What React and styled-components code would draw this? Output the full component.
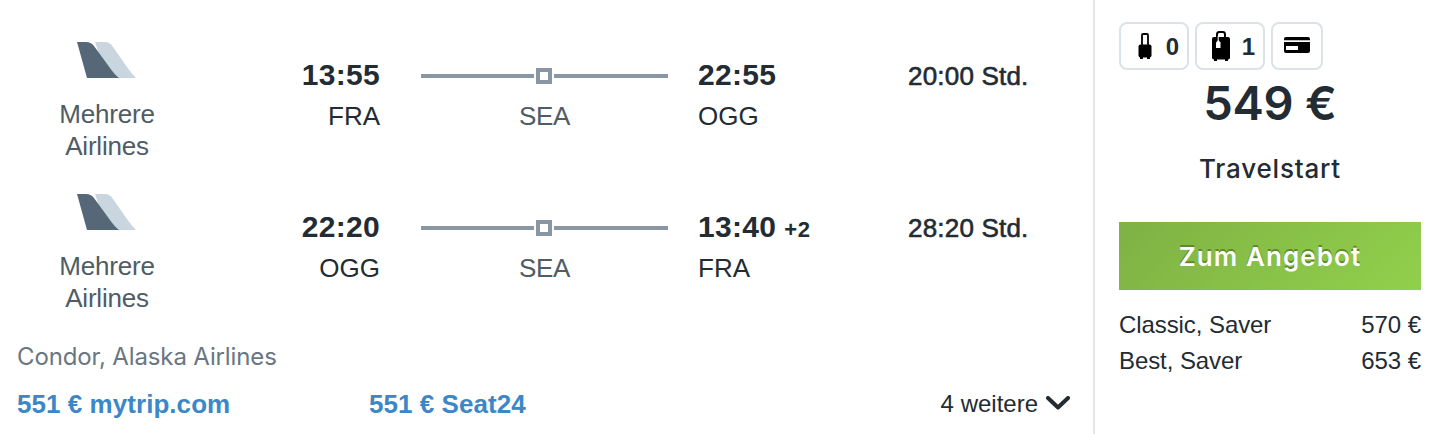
import styled, { createGlobalStyle } from 'styled-components';

const GlobalStyle = createGlobalStyle`
	* {
		box-sizing: border-box;
	}

	body {
		margin: 0;
		background-color: #ffffff;
		color: #232b33;
		font-family: 'Liberation Sans', Arial, sans-serif;
		font-size: 26px;
	}
`;

const legs = [
	{
		id: 'outbound',
		airline: ['Mehrere', 'Airlines'],
		departure: '13:55',
		from: 'FRA',
		stop: 'SEA',
		arrival: '22:55',
		to: 'OGG',
		duration: '20:00 Std.',
	},
	{
		id: 'return',
		airline: ['Mehrere', 'Airlines'],
		departure: '22:20',
		from: 'OGG',
		stop: 'SEA',
		arrival: '13:40',
		days: '+2',
		to: 'FRA',
		duration: '28:20 Std.',
	},
];

const fares = [
	{ name: 'Classic, Saver', price: '570 €' },
	{ name: 'Best, Saver', price: '653 €' },
];

const Card = styled.div`
	display: flex;
	width: 1430px;
	height: 434px;
	overflow: hidden;
`;

const Flights = styled.div`
	display: flex;
	flex-direction: column;
	width: 1095px;
	border-right: 2px solid #e3e8ed;
`;

const Leg = styled.div`
	display: grid;
	grid-template-columns: 180px 183px 288px 240px 1fr;
	height: 152px;
	padding-left: 17px;
`;

const Airline = styled.div`
	display: flex;
	flex-direction: column;
	align-items: center;
	padding-top: 42px;
	color: #4f5c66;
	line-height: 32px;
	letter-spacing: -0.2px;

	& svg {
		margin-bottom: 20px;
	}
`;

const Departure = styled.div`
	padding-top: 55px;
	text-align: right;
`;

const Arrival = styled.div`
	padding: 55px 0 0 30px;
`;

const Time = styled.div`
	height: 40px;
	font-size: 30px;
	font-weight: bold;
	line-height: 40px;
	letter-spacing: 0.3px;
	white-space: nowrap;
`;

const Days = styled.span`
	margin-left: 8px;
	font-size: 22px;
	letter-spacing: 0.6px;
`;

const Code = styled.div`
	line-height: 42px;
`;

const Route = styled.div`
	padding: 68px 0 0 41px;
	text-align: center;
	color: #4f5c66;
`;

const Track = styled.div`
	display: grid;
	grid-template-columns: 113px 16px 114px;
	align-items: center;
	gap: 2px;
	margin-bottom: 17px;
`;

const Line = styled.div`
	height: 4px;
	background-color: #8996a3;
`;

const Stop = styled.div`
	height: 16px;
	border: 4px solid #8996a3;
`;

const StopCode = styled.div`
	letter-spacing: -0.4px;
`;

const Duration = styled.div`
	padding-top: 56px;
	line-height: 40px;
	letter-spacing: 0.2px;
	-webkit-text-stroke: 0.6px #232b33;
`;

const Carriers = styled.div`
	padding: 37px 17px 0;
	font-family: Inter, sans-serif;
	font-size: 24px;
	line-height: 32px;
	letter-spacing: -0.13px;
	color: #697683;
`;

const Offers = styled.div`
	display: flex;
	align-items: center;
	height: 40px;
	margin-top: 11px;
	padding: 0 22px 0 17px;
`;

const Offer = styled.a`
	width: 352px;
	color: #3b87c8;
	font-size: 26px;
	font-weight: bold;
	letter-spacing: 0.05px;
`;

const More = styled.div`
	display: flex;
	align-items: center;
	gap: 8px;
	margin: 0 1px 0 auto;
	font-size: 24px;

	& svg {
		margin-bottom: 2px;
	}
`;

const Booking = styled.div`
	display: flex;
	flex-direction: column;
	width: 335px;
	padding: 22px 9px 0 24px;
`;

const Badges = styled.div`
	display: flex;
	gap: 6px;
`;

const Badge = styled.div`
	display: flex;
	align-items: center;
	justify-content: ${({ $count }) => ($count ? 'flex-end' : 'center')};
	gap: ${({ $gap }) => $gap || 0}px;
	width: ${({ $count }) => ($count ? 70 : 52)}px;
	height: 48px;
	padding: ${({ $count }) => ($count ? '0 8px 0 0' : '0 0 2px')};
	border: 2px solid #dbe2e8;
	border-radius: 8px;
	font-size: 24px;
	font-weight: bold;
`;

const Count = styled.span`
	padding-top: 2px;
`;

const Price = styled.div`
	margin-top: 3px;
	font-family: Inter, sans-serif;
	font-size: 47px;
	font-weight: 600;
	line-height: 60px;
	letter-spacing: -0.2px;
	text-align: center;
`;

const Provider = styled.div`
	margin-top: 20px;
	font-family: Inter, sans-serif;
	font-weight: 500;
	line-height: 32px;
	letter-spacing: 0.8px;
	text-align: center;
`;

const BookButton = styled.button`
	height: 68px;
	margin-top: 37px;
	padding: 0;
	border: 0;
	background: linear-gradient(135deg, #7fb144, #91d04b);
	color: #ffffff;
	font-family: Inter, sans-serif;
	font-size: 26px;
	font-weight: 600;
	letter-spacing: 1.1px;
	text-shadow: 0 -2px 0 #5e8a2c;
`;

const Fares = styled.div`
	margin-top: 17px;
`;

const Fare = styled.div`
	display: flex;
	justify-content: space-between;
	font-size: 24px;
	line-height: 36px;
	letter-spacing: -0.08px;
`;

const TailLogo = () => (
	<svg width="60" height="36" viewBox="0 0 60 36">
		<path d="M18 0H28Q33 0 36 5L50 25Q55 32 59 36H40L22 12Z" fill="#c9d6df" />
		<path d="M0 0H9Q14 0 17 4L33 26Q38 33 42 36H10Z" fill="#566878" />
	</svg>
);

const CabinBagIcon = () => (
	<svg width="14" height="26" viewBox="0 0 14 26">
		<path d="M4 12V2Q4 1 5 1H9Q10 1 10 2V12" fill="none" stroke="#000" strokeWidth="1.8" />
		<rect x="0.5" y="11.5" width="13" height="13" rx="2" />
		<path d="M2 23H5V26H2ZM9 23H12V26H9Z" />
	</svg>
);

const SuitcaseIcon = () => (
	<svg width="18" height="30" viewBox="0 0 18 30">
		<path d="M5 6V3.5Q5 1 7 1H11Q13 1 13 3.5V6" fill="none" stroke="#000" strokeWidth="2" />
		<rect y="6" width="18" height="22.5" rx="2" />
		<path d="M2 28H5V30H2ZM13 28H16V30H13Z" />
		<path d="M6.2 5V10" stroke="#fff" strokeWidth="1" />
		<path d="M4 11.5L6.2 9L8.5 11.5V17H4Z" fill="#fff" />
	</svg>
);

const CreditCardIcon = () => (
	<svg width="26" height="16" viewBox="0 0 26 16">
		<path d="M2 0H24Q26 0 26 2V3.3H0V2Q0 0 2 0Z" />
		<path d="M0 5H26V14Q26 16 24 16H2Q0 16 0 14ZM2 9V13H14V9Z" fillRule="evenodd" />
	</svg>
);

const ChevronIcon = () => (
	<svg width="24" height="14" viewBox="0 0 24 14">
		<path
			d="M2 2L12 11.5L22 2"
			fill="none"
			stroke="#232b33"
			strokeWidth="4"
			strokeLinecap="round"
			strokeLinejoin="round"
		/>
	</svg>
);

const FlightLeg = ({ leg }) => (
	<Leg>
		<Airline>
			<TailLogo />
			{leg.airline.map((word) => (
				<div key={word}>{word}</div>
			))}
		</Airline>
		<Departure>
			<Time>{leg.departure}</Time>
			<Code>{leg.from}</Code>
		</Departure>
		<Route>
			<Track>
				<Line />
				<Stop />
				<Line />
			</Track>
			<StopCode>{leg.stop}</StopCode>
		</Route>
		<Arrival>
			<Time>
				{leg.arrival}
				{leg.days && <Days>{leg.days}</Days>}
			</Time>
			<Code>{leg.to}</Code>
		</Arrival>
		<Duration>{leg.duration}</Duration>
	</Leg>
);

const App = () => (
	<>
		<GlobalStyle />
		<Card>
			<Flights>
				{legs.map((leg) => (
					<FlightLeg key={leg.id} leg={leg} />
				))}
				<Carriers>Condor, Alaska Airlines</Carriers>
				<Offers>
					<Offer>551 € mytrip.com</Offer>
					<Offer>551 € Seat24</Offer>
					<More>
						4 weitere
						<ChevronIcon />
					</More>
				</Offers>
			</Flights>
			<Booking>
				<Badges>
					<Badge $count $gap={14}>
						<CabinBagIcon />
						<Count>0</Count>
					</Badge>
					<Badge $count $gap={12}>
						<SuitcaseIcon />
						<Count>1</Count>
					</Badge>
					<Badge>
						<CreditCardIcon />
					</Badge>
				</Badges>
				<Price>549 €</Price>
				<Provider>Travelstart</Provider>
				<BookButton>Zum Angebot</BookButton>
				<Fares>
					{fares.map((fare) => (
						<Fare key={fare.name}>
							<span>{fare.name}</span>
							<span>{fare.price}</span>
						</Fare>
					))}
				</Fares>
			</Booking>
		</Card>
	</>
);

export default App;
